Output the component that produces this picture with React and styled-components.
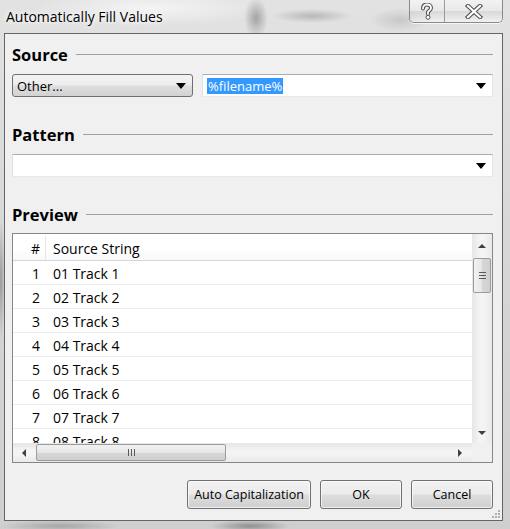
import React from 'react'
import styled, { createGlobalStyle } from 'styled-components'

const GlobalStyle = createGlobalStyle`
    html, body {
        margin: 0;
        padding: 0;
        width: 510px;
        height: 529px;
        overflow: hidden;
    }
    body {
        font-family: "Open Sans", "Noto Sans", sans-serif;
        color: #000;
    }
`

// blurred aero glass frame
const Frame = styled.div`
    width: 510px;
    height: 529px;
    box-sizing: border-box;
    display: flex;
    flex-direction: column;
    background:
        radial-gradient(ellipse 12px 20px at 256px 18px, #a4a4a4, transparent),
        radial-gradient(ellipse 40px 7px at 312px 16px, #b8b8b8, transparent),
        radial-gradient(ellipse 30px 12px at 400px 20px, #c8c8c8, transparent),
        radial-gradient(ellipse 120px 18px at 150px 8px, #f4f4f4, transparent),
        radial-gradient(ellipse 40px 6px at 250px 526px, #8f8f8f, transparent),
        radial-gradient(ellipse 60px 6px at 60px 526px, #a6a6a6, transparent),
        radial-gradient(ellipse 4px 60px at 1px 280px, #9a9a9a, transparent),
        linear-gradient(180deg, #e2e2e2 0%, #d6d6d6 50%, #cfcfcf 100%);
`

const TitleBar = styled.div`
    height: 33px;
    flex: none;
    display: flex;
    align-items: flex-start;
    padding: 0 7px 0 6px;
`

const Title = styled.div`
    font-size: 14px;
    line-height: 33px;
    color: #000;
    text-shadow: 0 0 8px #fff, 0 0 4px #fff;
`

const CaptionButtons = styled.div`
    margin-left: auto;
    display: flex;
    height: 22px;
    border: 1px solid #8a8a8a;
    border-top: none;
    border-radius: 0 0 5px 5px;
    overflow: hidden;
    box-shadow: 0 1px 0 rgba(255,255,255,0.7);
`

const CaptionButton = styled.div`
    width: ${p => p.$w}px;
    display: flex;
    align-items: center;
    justify-content: center;
    background: linear-gradient(180deg, rgba(255,255,255,0.55) 0%, rgba(255,255,255,0.25) 50%, rgba(200,200,200,0.35) 51%, rgba(255,255,255,0.5) 100%);
    & + & {
        border-left: 1px solid #9a9a9a;
    }
`

const Client = styled.div`
    flex: 1;
    margin: 0 7px 8px 4px;
    border: 1px solid #656565;
    background: #f0f0f0;
    padding: 10px 9px 0 7px;
    display: flex;
    flex-direction: column;
    position: relative;
`

const SectionHeader = styled.div`
    height: 20px;
    display: flex;
    align-items: center;
    gap: 8px;
    font-size: 16.5px;
    font-weight: 700;
    margin-top: ${p => p.$top || 0}px;

    &::after {
        content: "";
        flex: 1;
        height: 1px;
        background: #a0a0a0;
    }
`

const ComboRow = styled.div`
    display: flex;
    gap: 9px;
    margin-top: 10px;
`

const Combo = styled.div`
    height: 23px;
    box-sizing: border-box;
    display: flex;
    align-items: center;
    font-size: 13px;
    padding: 0 6px 0 4px;
    ${p => p.$button ? `
        width: 181px;
        flex: none;
        border: 1px solid #707070;
        border-radius: 3px;
        background: linear-gradient(180deg, #f4f4f4 0%, #ececec 48%, #dedede 52%, #d2d2d2 100%);
    ` : `
        flex: 1;
        border: 1px solid #abadb3;
        border-color: #abadb3 #e2e3ea #e3e9ef #dbdfe6;
        background: #fff;
    `}
`

const Selected = styled.span`
    background: #3399ff;
    color: #fff;
    padding: 0 1px;
    line-height: 16px;
`

const Arrow = styled.span`
    margin-left: auto;
    width: 0;
    height: 0;
    border-left: 5px solid transparent;
    border-right: 5px solid transparent;
    border-top: 6px solid #000;
`

const ListBox = styled.div`
    margin-top: 9px;
    height: 230px;
    box-sizing: border-box;
    border: 1px solid #828790;
    background: #fff;
    display: grid;
    grid-template-columns: 1fr 20px;
    grid-template-rows: 1fr 19px;
`

const Viewport = styled.div`
    overflow: hidden;
`

const Row = styled.div`
    display: grid;
    grid-template-columns: 33px 1fr;
    height: ${p => p.$header ? 27 : 24}px;
    box-sizing: border-box;
    padding-top: 2px;
    border-bottom: 1px solid ${p => p.$header ? '#d5d5d5' : '#ececec'};
    font-size: 14px;
    align-items: center;
    background: ${p => p.$header ? 'linear-gradient(180deg, #ffffff 0%, #ffffff 60%, #f7f8fa 100%)' : '#fff'};
`

const NumCell = styled.div`
    text-align: right;
    padding-right: 5px;
    height: 100%;
    display: flex;
    align-items: center;
    justify-content: flex-end;
    border-right: 1px solid ${p => p.$header ? '#e5e5e5' : 'transparent'};
`

const TextCell = styled.div`
    padding-left: 7px;
`

const VScroll = styled.div`
    background: linear-gradient(90deg, #e6e6e6, #f4f4f4 40%, #f4f4f4 60%, #e9e9e9);
    display: flex;
    flex-direction: column;
    align-items: center;
`

const HScroll = styled.div`
    background: linear-gradient(180deg, #e6e6e6, #f4f4f4 40%, #f4f4f4 60%, #e9e9e9);
    display: flex;
    align-items: center;
`

const Corner = styled.div`
    background: #f0f0f0;
`

const ScrollArrow = styled.div`
    width: 0;
    height: 0;
    flex: none;
    ${p => p.$dir === 'up' && `
        margin: 10px 0 10px;
        border-left: 4px solid transparent;
        border-right: 4px solid transparent;
        border-bottom: 4px solid #404040;
    `}
    ${p => p.$dir === 'down' && `
        margin: auto 0 8px;
        border-left: 4px solid transparent;
        border-right: 4px solid transparent;
        border-top: 4px solid #404040;
    `}
    ${p => p.$dir === 'left' && `
        margin: 0 10px 0 9px;
        border-top: 4px solid transparent;
        border-bottom: 4px solid transparent;
        border-right: 4px solid #404040;
    `}
    ${p => p.$dir === 'right' && `
        margin: 0 10px 0 auto;
        border-top: 4px solid transparent;
        border-bottom: 4px solid transparent;
        border-left: 4px solid #404040;
    `}
`

const Thumb = styled.div`
    box-sizing: border-box;
    border: 1px solid #9b9b9b;
    border-radius: 2px;
    display: flex;
    align-items: center;
    justify-content: center;
    gap: 2px;
    ${p => p.$vertical ? `
        width: 18px;
        height: 35px;
        flex-direction: column;
        background: linear-gradient(90deg, #f2f2f2, #e6e6e6 50%, #d6d6d6 51%, #d0d0d0);
    ` : `
        width: 190px;
        height: 17px;
        background: linear-gradient(180deg, #f2f2f2, #e6e6e6 50%, #d6d6d6 51%, #d0d0d0);
    `}
`

const Grip = styled.span`
    background: #5a5a5a;
    ${p => p.$vertical ? 'width: 7px; height: 1px;' : 'width: 1px; height: 7px;'}
`

const ButtonRow = styled.div`
    display: flex;
    justify-content: flex-end;
    gap: 9px;
    margin-top: 17px;
`

const Button = styled.button`
    width: ${p => p.$w}px;
    height: 29px;
    border: 1px solid #707070;
    border-radius: 3px;
    background: linear-gradient(180deg, #f2f2f2 0%, #ebebeb 48%, #dddddd 52%, #cfcfcf 100%);
    box-shadow: inset 0 0 0 1px rgba(255,255,255,0.7);
    font-family: "Open Sans", "Noto Sans", sans-serif;
    font-size: 12.5px;
    color: #000;
    padding: 0;
`

const ResizeGrip = styled.svg`
    position: absolute;
    right: 1px;
    bottom: 1px;
`

const tracks = [1, 2, 3, 4, 5, 6, 7, 8]

function HelpIcon() {
    return (
        <svg width="14" height="17" viewBox="0 0 14 17">
            <path d="M3 5.5 C3 2.5 5 1.5 7 1.5 C9.5 1.5 11 3 11 5 C11 7 9 7.5 8 9 L8 11" fill="none" stroke="#555" strokeWidth="4" strokeLinecap="round" />
            <path d="M3 5.5 C3 2.5 5 1.5 7 1.5 C9.5 1.5 11 3 11 5 C11 7 9 7.5 8 9 L8 11" fill="none" stroke="#fff" strokeWidth="1.8" strokeLinecap="round" />
            <circle cx="8" cy="14.3" r="2" fill="#fff" stroke="#555" strokeWidth="1" />
        </svg>
    )
}

function CloseIcon() {
    return (
        <svg width="18" height="15" viewBox="0 0 18 15">
            <path d="M3 2 L15 13 M15 2 L3 13" stroke="#555" strokeWidth="4.4" strokeLinecap="square" />
            <path d="M3 2 L15 13 M15 2 L3 13" stroke="#fff" strokeWidth="2.2" strokeLinecap="square" />
        </svg>
    )
}

export default function App() {
    return (
        <>
            <GlobalStyle />
            <Frame>
                <TitleBar>
                    <Title>Automatically Fill Values</Title>
                    <CaptionButtons>
                        <CaptionButton $w={34}><HelpIcon /></CaptionButton>
                        <CaptionButton $w={57}><CloseIcon /></CaptionButton>
                    </CaptionButtons>
                </TitleBar>
                <Client>
                    <SectionHeader>Source</SectionHeader>
                    <ComboRow>
                        <Combo $button>Other...<Arrow /></Combo>
                        <Combo><Selected>%filename%</Selected><Arrow /></Combo>
                    </ComboRow>

                    <SectionHeader $top={27}>Pattern</SectionHeader>
                    <ComboRow>
                        <Combo><Arrow /></Combo>
                    </ComboRow>

                    <SectionHeader $top={27}>Preview</SectionHeader>
                    <ListBox>
                        <Viewport>
                            <Row $header>
                                <NumCell $header>#</NumCell>
                                <TextCell>Source String</TextCell>
                            </Row>
                            {tracks.map(n => (
                                <Row key={n}>
                                    <NumCell>{n}</NumCell>
                                    <TextCell>{`0${n} Track ${n}`}</TextCell>
                                </Row>
                            ))}
                        </Viewport>
                        <VScroll>
                            <ScrollArrow $dir="up" />
                            <Thumb $vertical>
                                <Grip $vertical /><Grip $vertical /><Grip $vertical />
                            </Thumb>
                            <ScrollArrow $dir="down" />
                        </VScroll>
                        <HScroll>
                            <ScrollArrow $dir="left" />
                            <Thumb>
                                <Grip /><Grip /><Grip />
                            </Thumb>
                            <ScrollArrow $dir="right" />
                        </HScroll>
                        <Corner />
                    </ListBox>

                    <ButtonRow>
                        <Button $w={124}>Auto Capitalization</Button>
                        <Button $w={82}>OK</Button>
                        <Button $w={82}>Cancel</Button>
                    </ButtonRow>

                    <ResizeGrip width="11" height="11" viewBox="0 0 11 11">
                        {[[8, 2], [8, 5], [5, 5], [8, 8], [5, 8], [2, 8]].map(([x, y], i) => (
                            <rect key={i} x={x} y={y} width="2" height="2" fill="#b0b0b0" />
                        ))}
                    </ResizeGrip>
                </Client>
            </Frame>
        </>
    )
}
